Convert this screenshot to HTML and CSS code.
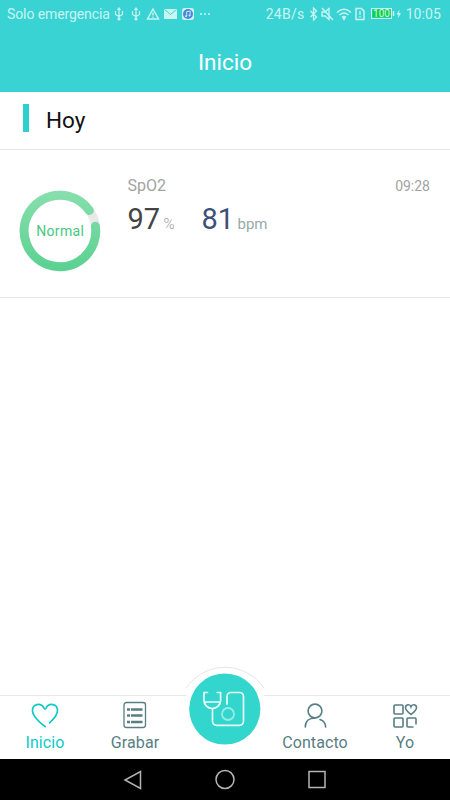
FILE: index.html
```html
<!DOCTYPE html>
<html lang="es">
<head>
  <meta charset="UTF-8">
  <title>Inicio</title>
  <link rel="stylesheet" href="styles.css">
</head>
<body>

<header>
  <div class="status">
    <span class="carrier">Solo emergencia</span>
    <svg class="status-left" width="98" height="14" viewBox="0 0 98 14">
      <g id="usb" fill="none" stroke="currentColor" stroke-width="1.200">
        <path d="M6 1v11M2.500 4v3.500L6 9.500l3.500-2V4M4.500 3L6 1l1.500 2"/>
        <circle cx="6" cy="12" r="1" fill="currentColor"/>
      </g>
      <use href="#usb" x="17"/>
      <path d="M40 2L45.500 12h-11zM40 5.500v3M40 9.500v1.200" fill="none" stroke="currentColor" stroke-width="1.400"/>
      <path d="M51 2h13v10H51z" fill="currentColor"/>
      <path d="M51.500 2.500l6 5 6-5" fill="none" stroke="#3ad3d3"/>
      <rect x="69" y="1" width="12" height="12" rx="2.500" fill="currentColor"/>
      <circle cx="75" cy="7" r="5" fill="#4a86dc"/>
      <path d="M73.700 9V4.700l3.500-.7V8.300" fill="none" stroke="#d9f2ff" stroke-width=".9"/>
      <circle cx="73" cy="9.200" r=".9" fill="#d9f2ff"/><circle cx="76.500" cy="8.500" r=".9" fill="#d9f2ff"/>
      <path d="M87 6.200h2v1.600h-2zM91 6.200h2v1.600h-2zM95 6.200h2v1.600h-2z" fill="currentColor"/>
    </svg>
    <span class="speed">24B/s</span>
    <svg class="status-right" width="95" height="14" viewBox="0 0 95 14" fill="none" stroke="currentColor" stroke-width="1.300">
      <path d="M1.500 4l6 6L4.500 13V1l3 3-6 6"/>
      <path d="M13 5h3l4-3.500v11L16 9h-3zM13 1l11 12"/>
      <path d="M28 5.500q7-6.500 14 0M30.500 8q4.500-4 9 0M33 10.200q2-1.700 4 0"/>
      <path d="M34 11h2l-1 1.500z" fill="currentColor"/>
      <path d="M47 1.600h5.500l2.500 2.500v8.300h-8z" stroke-width="1.500"/>
      <path d="M51 4v4M51 9v1.500"/>
      <rect x="62.500" y="1.500" width="20" height="10" stroke-width="1"/>
      <path d="M63.500 2.500h18v8h-18z" fill="#0bd04b" stroke="none"/>
      <path d="M84.500 4v5" stroke-width="1.500"/>
      <path d="M90.500 2.500L87.500 7.500h2l-.7 3.700 3.200-5h-2z" fill="currentColor" stroke="none"/>
      <text class="battery" x="72.500" y="10" text-anchor="middle">100</text>
    </svg>
    <span class="clock">10:05</span>
  </div>
  <h1>Inicio</h1>
</header>

<main>
  <h2>Hoy</h2>
  <section class="record">
    <svg class="ring" width="82" height="82" viewBox="0 0 82 82">
      <defs>
        <linearGradient id="ringGreen" x1="0" y1="0" x2="0" y2="1">
          <stop offset="0" stop-color="#85deab"/>
          <stop offset="1" stop-color="#5bd292"/>
        </linearGradient>
      </defs>
      <circle cx="41" cy="41" r="35.800" fill="none" stroke="#e9e9e9" stroke-width="9"/>
      <path d="M76.400 36.300A35.800 35.800 0 1 1 70.300 20.500" fill="none" stroke="url(#ringGreen)" stroke-width="9" stroke-linecap="round"/>
      <text class="ring-label" x="41.200" y="46" text-anchor="middle">Normal</text>
    </svg>
    <div class="data">
      <div class="data-top"><span class="type">SpO2</span><time>09:28</time></div>
      <div class="values">
        <span class="spo2">97</span><span class="percent">%</span>
        <span class="pulse">81</span><span class="bpm">bpm</span>
      </div>
    </div>
  </section>
</main>

<nav class="tabs">
  <a class="tab active">
    <svg width="30" height="28" viewBox="0 0 30 28" fill="none" stroke="currentColor" stroke-width="1.700" stroke-linecap="round">
      <path d="M15.300 25.700C10 22 2.500 15 2.500 9.500C2.500 2.500 11 1.500 14 7.200Q15 8.500 16 7.200C19 1.500 27.500 2.500 27.500 9.500C27.500 14 23.500 18.300 19.500 21.800"/>
    </svg>
    <span>Inicio</span>
  </a>
  <a class="tab">
    <svg width="30" height="28" viewBox="0 0 30 28" fill="none" stroke="currentColor">
      <rect x="4" y="1.500" width="21.500" height="25" rx="2.500" stroke-width="1.300"/>
      <path d="M7 8.500h3M11 8.500h11.500M7 14.500h3M11 14.500h11.500M7 21h3M11 21h11.500" stroke-width="2.500"/>
    </svg>
    <span>Grabar</span>
  </a>
  <a class="tab measure">
    <svg width="78" height="84" viewBox="0 0 78 84" fill="none">
      <path d="M0 22.300A46.700 46.700 0 0 1 78 22.300V84H0z" fill="#fff"/>
      <path d="M0 22.300A46.700 46.700 0 0 1 78 22.300" stroke="#e6e6e6"/>
      <circle cx="38.800" cy="43" r="35.600" fill="#33d6cc"/>
      <g stroke="#e9fffc" stroke-width="1.700" stroke-linecap="round" stroke-linejoin="round">
        <path d="M21.500 26.500h-3.500v8a8.300 8 0 0 0 16.600 0v-8H31.300M18.300 36h16"/>
        <path d="M26.500 42.800v12.500a4 4 0 0 0 4 4h23a4 4 0 0 0 4-4V30.500a4 4 0 0 0-4-4h-8.500a4 4 0 0 0-4 4v7.500"/>
      </g>
      <circle cx="42" cy="48" r="6" stroke="#97ebe5" stroke-width="1.800"/>
    </svg>
  </a>
  <a class="tab">
    <svg width="30" height="28" viewBox="0 0 30 28" fill="none" stroke="currentColor" stroke-width="1.600" stroke-linecap="round">
      <circle cx="15" cy="10" r="6.900"/>
      <path d="M5.300 26C5.300 20.500 9 17 15 17M20 18.500Q25.500 20.500 25.700 26"/>
    </svg>
    <span>Contacto</span>
  </a>
  <a class="tab">
    <svg width="30" height="28" viewBox="0 0 30 28" fill="none" stroke="currentColor" stroke-width="1.600">
      <rect x="4" y="4" width="9" height="9" rx="1"/>
      <rect x="4" y="17" width="9" height="9" rx="1"/>
      <path d="M21 13.500C18.500 11.500 15.500 9 15.500 6.700C15.500 3.200 20 2.800 21 5.800C22 2.800 26.500 3.200 26.500 6.700C26.500 9 23.500 11.500 21 13.500z"/>
      <path d="M23.500 26H18a1 1 0 0 1-1-1V18a1 1 0 0 1 1-1h7a1 1 0 0 1 1 1v5.500"/>
    </svg>
    <span>Yo</span>
  </a>
</nav>

<footer class="system">
  <svg width="20" height="22" viewBox="0 0 20 22"><path d="M17.500 2.500v17L2 11z"/></svg>
  <svg width="20" height="22" viewBox="0 0 20 22"><circle cx="10" cy="10.500" r="9"/></svg>
  <svg width="20" height="22" viewBox="0 0 20 22"><rect x="2" y="2.500" width="16" height="16"/></svg>
</footer>

</body>
</html>
```
FILE: styles.css
```css
* { box-sizing:border-box; }
body { font-family: Roboto, sans-serif; margin:0; height:800px; background:#fff; display:flex; flex-direction:column; overflow:hidden; }
svg { display:block; flex:none; }
header { background:#3ad3d3; height:91.5px; color:#fff; }
.status { display:flex; align-items:center; height:28px; padding:0 9px 0 7px; font-size:14px; color:#c8f5f2; white-space:nowrap; }
.carrier { width:103px; letter-spacing:-0.1px; }
.status-left { margin-left:3px; }
.speed { margin-left:auto; letter-spacing:0.3px; }
.status-right { margin-left:4px; }
.clock { margin-left:2px; letter-spacing:0.1px; }
.battery { font-size:10px; fill:#d8fbe0; stroke:none; }
h1 { margin:0; padding-top:20px; text-align:center; font-size:22.5px; line-height:28px; font-weight:400; }
main { flex:1; }
h2 { display:flex; align-items:center; margin:0; height:58.5px; padding:0 0 0 23px; border-bottom:1px solid #e6e6e6; font-size:22.5px; font-weight:400; color:#111; }
h2::before { content:""; width:6px; height:28px; margin:-4px 17px 0 0; background:#2bd0cf; }
.record { display:flex; height:148px; padding:26px 20px 0 19px; border-bottom:1px solid #e6e6e6; }
.ring { margin-top:13.5px; }
.ring-label { font-size:14px; letter-spacing:0.3px; fill:#46c880; }
.data { flex:1; margin-left:26.5px; }
.data-top { display:flex; justify-content:space-between; align-items:center; height:19px; font-size:16px; color:#a2a2a2; }
time { font-size:14px; }
.values { display:flex; align-items:baseline; margin-top:7px; line-height:34px; font-size:29px; font-weight:400; }
.spo2 { width:36px; color:#444; }
.percent { width:38px; font-size:15px; font-weight:300; color:#999; }
.pulse { width:36px; color:#3d5078; }
.bpm { font-size:15px; font-weight:400; color:#98a9a8; }
.tabs { display:grid; grid-template-columns:repeat(5, 1fr); height:64px; border-top:1px solid #e6e6e6; }
.tab { display:flex; flex-direction:column; align-items:center; padding-top:5px; font-size:16px; line-height:19px; color:#577e83; }
.tab span { margin-top:4px; letter-spacing:0.1px; }
.active { color:#0dcac9; }
.measure { padding:0; margin-top:-30px; }
.system { display:flex; justify-content:center; align-items:center; gap:72px; height:41px; background:#000; }
.system svg { fill:none; stroke:#b5b5b5; stroke-width:1.500; }
```
